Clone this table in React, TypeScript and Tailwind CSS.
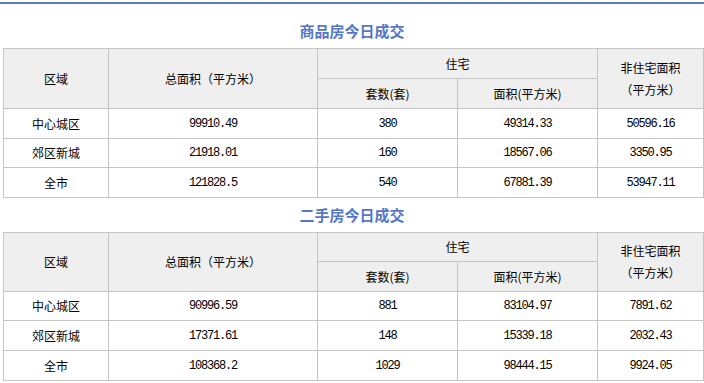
import React from "react";

type Row = { area: string; total: string; sets: string; res: string; nonRes: string };

const newHouses: Row[] = [
  { area: "中心城区", total: "99910.49", sets: "380", res: "49314.33", nonRes: "50596.16" },
  { area: "郊区新城", total: "21918.01", sets: "160", res: "18567.06", nonRes: "3350.95" },
  { area: "全市", total: "121828.5", sets: "540", res: "67881.39", nonRes: "53947.11" },
];

const usedHouses: Row[] = [
  { area: "中心城区", total: "90996.59", sets: "881", res: "83104.97", nonRes: "7891.62" },
  { area: "郊区新城", total: "17371.61", sets: "148", res: "15339.18", nonRes: "2032.43" },
  { area: "全市", total: "108368.2", sets: "1029", res: "98444.15", nonRes: "9924.05" },
];

const cjk = "font-['Noto_Sans_CJK_SC','Noto_Sans',sans-serif]";
const num = "font-['Liberation_Mono',monospace] text-[12px] tracking-[-1.2px]";

const Title = ({ text }: { text: string }) => (
  <div className={`h-[34px] flex items-center justify-center text-[15px] font-bold text-[#5677c6] ${cjk}`}>
    {text}
  </div>
);

const DealTable = ({ rows, heights }: { rows: Row[]; heights: number[] }) => {
  const th = "border border-[#c4c4c4] bg-[#efefef] font-normal text-center align-middle p-0";
  const td = "border border-[#c4c4c4] text-center align-middle p-0";
  return (
    <table className={`ml-[3px] w-[700px] table-fixed border-collapse text-[12px] text-black leading-none ${cjk}`}>
      <colgroup>
        <col className="w-[105px]" />
        <col className="w-[209px]" />
        <col className="w-[140px]" />
        <col className="w-[140px]" />
        <col className="w-[106px]" />
      </colgroup>
      <thead>
        <tr style={{ height: heights[0] }}>
          <th rowSpan={2} className={th}>区域</th>
          <th rowSpan={2} className={th}>总面积（平方米）</th>
          <th colSpan={2} className={th}>住宅</th>
          <th rowSpan={2} className={`${th} leading-[22px]`}>
            非住宅面积
            <br />
            （平方米）
          </th>
        </tr>
        <tr style={{ height: heights[1] }}>
          <th className={th}>套数(套)</th>
          <th className={th}>面积(平方米)</th>
        </tr>
      </thead>
      <tbody>
        {rows.map((r, i) => (
          <tr key={r.area} style={{ height: heights[i + 2] }}>
            <td className={td}>{r.area}</td>
            <td className={`${td} ${num}`}>{r.total}</td>
            <td className={`${td} ${num}`}>{r.sets}</td>
            <td className={`${td} ${num}`}>{r.res}</td>
            <td className={`${td} ${num}`}>{r.nonRes}</td>
          </tr>
        ))}
      </tbody>
    </table>
  );
};

export default function App() {
  return (
    <div className="w-[704px] h-[383px] bg-white overflow-hidden pt-[2px]">
      <div className="h-[2px] bg-[#5a7bc6]" />
      <div className="mt-[10px]">
        <Title text="商品房今日成交" />
        <DealTable rows={newHouses} heights={[30, 30, 30, 29, 30]} />
        <Title text="二手房今日成交" />
        <DealTable rows={usedHouses} heights={[29, 30, 29, 30, 30]} />
      </div>
    </div>
  );
}
